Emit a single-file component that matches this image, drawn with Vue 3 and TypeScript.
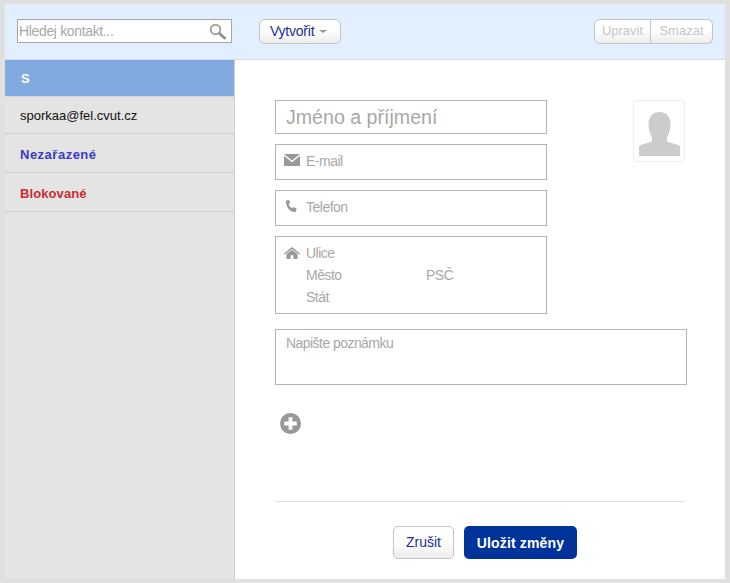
<template>
  <div class="app">
    <div class="toolbar">
      <div class="search">
        <input type="text" placeholder="Hledej kontakt..." />
        <svg class="search-icon" width="17" height="17" viewBox="0 0 17 17">
          <circle cx="6.5" cy="6.5" r="4.8" fill="none" stroke="#a8a39a" stroke-width="2" />
          <path d="M10.500 10.500l5 4.500" stroke="#8f9294" stroke-width="3" stroke-linecap="round" />
        </svg>
      </div>
      <button class="btn create">Vytvořit <span class="caret"></span></button>
      <div class="btn-group">
        <button class="btn disabled">Upravit</button>
        <button class="btn disabled">Smazat</button>
      </div>
    </div>

    <div class="main">
      <div class="sidebar">
        <div class="group-head">S</div>
        <div v-for="item in items" :key="item.label" class="side-item" :class="item.cls">
          {{ item.label }}
        </div>
      </div>

      <div class="content">
        <div class="top-row">
          <div class="fields">
            <div class="field name">
              <input type="text" placeholder="Jméno a příjmení" />
            </div>
            <div class="field contact">
              <svg class="icon" width="16" height="12" viewBox="0 0 16 12">
                <path d="M0 0h16L8 6.500z" fill="#989898" />
                <path d="M0 1.800V12h16V1.800L8 8.300z" fill="#989898" />
              </svg>
              <input type="text" placeholder="E-mail" />
            </div>
            <div class="field contact">
              <svg class="icon" width="16" height="13" viewBox="0 0 16 13">
                <path d="M2.500 0.500L5 0l1.200 3-1.500 1.200c.6 2 1.800 3.300 3.600 4L9.600 7l3 1.500-.6 2.600c-.2.7-.8 1-1.500.9C6 11.500 2.800 8 2 2.400c-.1-.9 0-1.600.5-1.900z" fill="#989898" />
              </svg>
              <input type="text" placeholder="Telefon" />
            </div>
            <div class="field address">
              <svg class="icon" width="16" height="12" viewBox="0 0 16 12">
                <path d="M8 0L0 6.600l.8.900L8 1.900l7.200 5.600.8-.9z" fill="#989898" />
                <path d="M2.500 7L8 2.900 13.500 7v5H9.500V8.300h-3V12h-4z" fill="#989898" />
              </svg>
              <div class="address-lines">
                <input type="text" placeholder="Ulice" />
                <div class="city-row">
                  <input type="text" placeholder="Město" />
                  <input type="text" placeholder="PSČ" />
                </div>
                <input type="text" placeholder="Stát" />
              </div>
            </div>
          </div>
          <div class="avatar">
            <svg width="41" height="44" viewBox="0 0 41 44">
              <path d="M20.500 0c6.500 0 11 4.500 11 12 0 6-1.500 10-3.500 13.500v3c0 1.500 4 2.500 8 3.500 3 .8 5 1.500 5 2.500V44H0v-9.500c0-1 2-1.700 5-2.500 4-1 8-2 8-3.500v-3C11 22 9.500 18 9.500 12 9.500 4.500 14 0 20.500 0z" fill="#cccccb" />
            </svg>
          </div>
        </div>

        <div class="note">Napište poznámku</div>

        <button class="add" aria-label="Přidat">
          <svg width="21" height="21" viewBox="0 0 22 22">
            <circle cx="11" cy="11" r="11" fill="#989898" />
            <path d="M9 4.500h4V9h4.500v4H13v4.500H9V13H4.500V9H9z" fill="#fff" />
          </svg>
        </button>

        <div class="footer">
          <button class="btn cancel">Zrušit</button>
          <button class="save">Uložit změny</button>
        </div>
      </div>
    </div>
  </div>
</template>

<script setup lang="ts">
interface SideItem {
  label: string
  cls: string
}

const items: SideItem[] = [
  { label: 'sporkaa@fel.cvut.cz', cls: 'contact-item' },
  { label: 'Nezařazené', cls: 'uncategorized' },
  { label: 'Blokované', cls: 'blocked' }
]
</script>

<style>
html,
body {
  margin: 0;
  background: #e0e0e0;
}
</style>

<style scoped>
.app {
  box-sizing: border-box;
  width: 730px;
  height: 583px;
  padding: 4px 5px;
  background: #e0e0e0;
  display: flex;
  flex-direction: column;
  font-family: "Liberation Sans", Arial, sans-serif;
}

input {
  border: none;
  outline: none;
  background: none;
  padding: 0;
  margin: 0;
  font-family: inherit;
  font-size: 14px;
  letter-spacing: -0.5px;
  color: #333;
  min-width: 0;
}

input::placeholder {
  color: #aaa8a6;
  opacity: 1;
}

.toolbar {
  height: 55px;
  flex: none;
  box-sizing: border-box;
  padding: 15px 12px 0;
  display: flex;
  align-items: flex-start;
  background: #e2effe;
}

.search {
  box-sizing: border-box;
  width: 215px;
  height: 24px;
  background: #fff;
  border: 1px solid #a6a6a6;
  display: flex;
  align-items: center;
  padding: 0 5px 0 1px;
}

.search input {
  flex: 1;
  letter-spacing: -0.35px;
}

.search-icon {
  flex: none;
}

.btn {
  box-sizing: border-box;
  height: 25px;
  border: 1px solid #c4c4c4;
  background: linear-gradient(#fff, #fff 45%, #ececec);
  font-family: inherit;
  font-size: 14px;
  color: #1c2f96;
  padding: 0 0 2px;
  cursor: pointer;
}

.create {
  width: 82px;
  margin-left: 27px;
  padding-right: 3px;
  border-radius: 6px;
  letter-spacing: -0.2px;
}

.caret {
  display: inline-block;
  vertical-align: middle;
  margin-left: 1px;
  border-left: 4px solid transparent;
  border-right: 4px solid transparent;
  border-top: 3px solid #999;
}

.btn-group {
  margin-left: auto;
  display: flex;
}

.btn-group .disabled {
  font-size: 13px;
  color: #c6c6c6;
  cursor: default;
}

.btn-group .disabled:first-child {
  width: 57px;
  border-radius: 6px 0 0 6px;
}

.btn-group .disabled:last-child {
  width: 62px;
  border-left: none;
  border-radius: 0 6px 6px 0;
}

.main {
  flex: 1;
  display: flex;
  min-height: 0;
  border-top: 1px solid #d4dde8;
}

.sidebar {
  width: 230px;
  flex: none;
  box-sizing: border-box;
  background: #e4e4e4;
  border-right: 1px solid #cfcfcf;
}

.group-head {
  height: 37px;
  box-sizing: border-box;
  padding: 0 16px;
  display: flex;
  align-items: center;
  background: #81aae1;
  border-bottom: 1px solid #cfd6df;
  color: #fff;
  font-size: 13px;
  font-weight: bold;
}

.side-item {
  box-sizing: border-box;
  height: 39px;
  padding: 0 15px;
  display: flex;
  align-items: center;
  border-bottom: 1px solid #cfcfcf;
  font-size: 13px;
}

.contact-item {
  height: 37px;
  color: #111;
}

.uncategorized {
  padding-top: 2px;
  letter-spacing: 0.5px;
  color: #3a3cc4;
  font-weight: bold;
}

.blocked {
  padding-top: 2px;
  letter-spacing: 0.1px;
  color: #cc2b30;
  font-weight: bold;
}

.content {
  flex: 1;
  min-width: 0;
  background: #fff;
  padding: 40px 38px 0 40px;
  display: flex;
  flex-direction: column;
  box-sizing: border-box;
}

.top-row {
  width: 410px;
  display: flex;
  justify-content: space-between;
  align-items: flex-start;
}

.fields {
  width: 272px;
  display: flex;
  flex-direction: column;
  gap: 10px;
}

.field {
  box-sizing: border-box;
  border: 1px solid #b4b4b4;
  display: flex;
}

.name {
  height: 34px;
  align-items: center;
  padding: 0 10px;
}

.name input {
  width: 100%;
  font-size: 19.6px;
  letter-spacing: 0;
}

.contact {
  height: 36px;
  padding: 9px 8px;
  gap: 6px;
}

.contact input {
  flex: 1;
  height: 16px;
  margin-top: -1px;
}

.icon {
  flex: none;
}

.address {
  height: 78px;
  padding: 9px 8px;
  gap: 6px;
}

.address .icon {
  margin-top: 1px;
}

.address-lines {
  flex: 1;
  display: flex;
  flex-direction: column;
  gap: 6px;
  margin-top: -1px;
}

.address-lines input {
  height: 16px;
}

.city-row {
  display: grid;
  grid-template-columns: 120px 1fr;
}

.avatar {
  box-sizing: border-box;
  width: 52px;
  height: 62px;
  border: 1px solid #eeeeee;
  border-radius: 3px;
  display: flex;
  align-items: flex-end;
  justify-content: center;
  padding-bottom: 5px;
}

.note {
  box-sizing: border-box;
  width: 412px;
  height: 56px;
  margin-top: 15px;
  padding: 6px 10px;
  border: 1px solid #b4b4b4;
  font-size: 14px;
  letter-spacing: -0.55px;
  line-height: 15px;
  color: #aaa8a6;
}

.add {
  align-self: flex-start;
  width: 21px;
  height: 21px;
  margin: 28px 0 0 5px;
  padding: 0;
  border: none;
  background: none;
  cursor: pointer;
}

.add svg {
  display: block;
}

.footer {
  margin-top: 67px;
  padding: 24px 0 0 118px;
  width: 410px;
  box-sizing: border-box;
  border-top: 1px solid #e0e0e0;
  display: flex;
  gap: 10px;
}

.cancel {
  width: 61px;
  height: 33px;
  border-radius: 5px;
}

.save {
  width: 113px;
  height: 33px;
  border: none;
  border-radius: 5px;
  background: #003399;
  color: #fff;
  font-family: inherit;
  font-size: 14px;
  font-weight: bold;
  letter-spacing: 0.15px;
  cursor: pointer;
}
</style>
